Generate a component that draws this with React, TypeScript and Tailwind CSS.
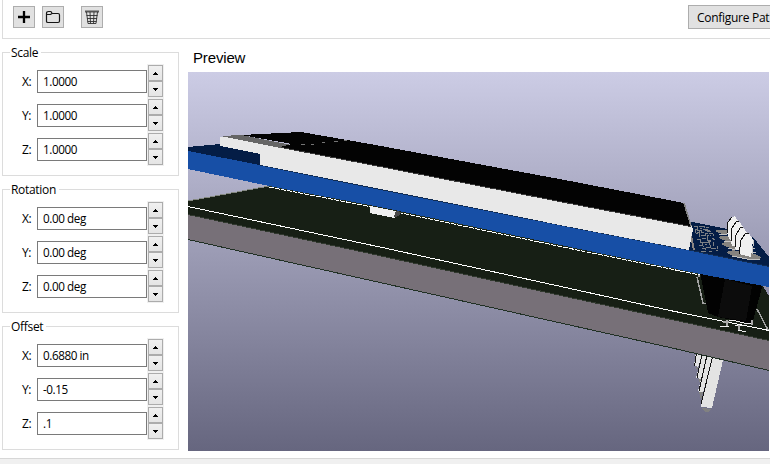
import React from "react";

const uiFont = "font-['Open_Sans','Noto_Sans',sans-serif]";

function ToolButton({ label, className = "", children }: { label: string; className?: string; children: React.ReactNode }) {
  return (
    <button aria-label={label} className={`flex h-[22px] w-[22px] shrink-0 items-center justify-center border border-[#adadad] bg-[#e1e1e1] ${className}`}>
      {children}
    </button>
  );
}

function Arrow({ down = false }: { down?: boolean }) {
  return (
    <svg width="5" height="3" viewBox="0 0 5 3" shapeRendering="crispEdges" className={down ? "rotate-180" : ""}>
      <path d="M2 0h1v1h1v1h1v1H0V2h1V1h1z" />
    </svg>
  );
}

function Spinner() {
  return (
    <div className="flex h-[34px] w-[17px] flex-col bg-[#f0f0f0] p-px">
      <button aria-label="Increase" className="flex h-4 items-center justify-center border border-[#acacac] bg-linear-to-b from-[#f0f0f0] to-[#e5e5e5]">
        <Arrow />
      </button>
      <button aria-label="Decrease" className="flex h-4 items-center justify-center border border-[#acacac] bg-linear-to-b from-[#f0f0f0] to-[#e5e5e5]">
        <Arrow down />
      </button>
    </div>
  );
}

function Group({ title, values }: { title: string; values: string[] }) {
  return (
    <fieldset className="h-[131px] w-[177px] min-w-0 border border-[#dcdcdc] pl-[9px]">
      <legend className="-ml-[2px] h-[15px] pr-[3px] pl-[1px] text-[12px] leading-[15px] tracking-[-0.3px]">{title}</legend>
      <div className="flex flex-col pt-1">
        {values.map((value, i) => (
          <div key={i} className="flex h-[34px] items-center">
            <span className="w-[25px] pt-[2px] pl-[10px] text-[12px] leading-4 tracking-[-0.4px]">{["X:", "Y:", "Z:"][i]}</span>
            <div className="flex h-[23px] w-[110px] items-center border border-[#7a7a7a] bg-white pb-px pl-[5px] text-[11.7px] leading-4 tracking-[-0.42px] whitespace-pre">
              {value}
            </div>
            <Spinner />
          </div>
        ))}
      </div>
    </fieldset>
  );
}

function BoardPreview() {
  return (
    <svg width="581" height="379" viewBox="188 72 581 379" shapeRendering="crispEdges" className="block">
      <defs>
        <linearGradient id="sky" x1="0" y1="0" x2="0" y2="1">
          <stop offset="0" stopColor="#cccce5" />
          <stop offset="1" stopColor="#66667f" />
        </linearGradient>
      </defs>
      <rect x="188" y="72" width="581" height="379" fill="url(#sky)" />

      {/* pins below the carrier board */}
      <g fill="#e3e3e3">
        <path d="M696 352H704L698 367L694 365Z" />
        <path d="M702 353H708L701 379L696 378Z" />
        <path d="M707 354H713L703 393L698 391Z" />
        <path d="M712 355H723V360L712 408L701 407V403Z" />
      </g>
      <path d="M699 392h4l-2 8zM702 408l9 1-3 3h-3zM696 367h2v2h-2zM698 379h3l-1 4z" fill="#818181" />
      <path d="M696.500 353L694.500 366M702 354L697 378M707 355L699 391M712.500 357L701 404" stroke="#141414" fill="none" />

      {/* carrier board */}
      <path d="M188 201L269 186L700 230L763 286L769 296V341L188 214Z" fill="#171f15" />
      <path d="M188 201L269 186" stroke="#858982" />
      <path d="M188 214L370 253L570 297L769 340V370L188 239Z" fill="#777078" />
      <path d="M188 214.500L370 253.500L570 297.500L769 340.500" stroke="#30382e" fill="none" />
      <path d="M188 239.500L670 347.500L769 370.500" stroke="#203024" fill="none" />
      <path d="M188 206.500L380 247L570 288.500L670 310.500L769 330.500" stroke="#fff" fill="none" />
      <path d="M269 187L380 208.500L570 248.500L700 275" stroke="#fff" strokeDasharray="5 1" fill="none" />
      <path d="M269 186L380 207.500L570 247.500L700 274" stroke="#22301f" strokeDasharray="3 2" fill="none" />
      <path d="M370 206L400 212L394 218L370 213Z" fill="#efefef" />
      <path d="M396 211l5 1-2 4-5 1z" fill="#484848" />

      {/* socket */}
      <path d="M697 277l6 26 4 1M698 276h2" stroke="#a2a2a2" strokeWidth="1.500" fill="none" />
      <path d="M700 272L708 313L718 317L752 324L763 284Z" fill="#020202" />
      <path d="M725 279L752 286L746 321L718 317Z" fill="#0c0c0c" />
      <path d="M757 309L768 330" stroke="#a2a2a2" strokeWidth="1.500" />
      <path d="M729 320l7 1 8 2 9 1M720 326l9 1M735 325h9M738 330l8 2" stroke="#eee" fill="none" />
      <path d="M727 320v6M739 325v5M752 320v5M723 322h6" stroke="#aaa" strokeWidth="2" fill="none" />

      {/* module board */}
      <path d="M188 147L220 144L260 153V166L188 151Z" fill="#041d46" />
      <path d="M688 222L693 222L727 229L753 237L769 257V268L685 250Z" fill="#041d46" />
      <path d="M188 151L260 165L370 187.500L570 227L689 250L769 266.500V287L700 274L570 247L380 207L269 186L188 169Z" fill="#174fa6" />
      <path d="M260 165L370 187.500L570 227L689 250L769 266.500" stroke="#102b51" fill="none" />

      {/* display */}
      <path d="M220 137L241 135L692 226L693 229L689 250L570 227L370 187L260 165V154L220 146Z" fill="#e8e8e8" />
      <path d="M220 136L241 135L292 145L281 148Z" fill="#656565" />
      <path d="M241 135L301 132L370 144L570 181L684 203L691 226L570 203L380 166L280 147L292 144Z" fill="#030303" />
      <path d="M281 147.500L380 166.500L570 203.500L691 226.500" stroke="#383838" fill="none" />
      <path d="M301 145l4-1M311 144h3M322 142h3M334 141h4M344 140h3" stroke="#747474" fill="none" />
      <path d="M684 203L691 226" stroke="#828282" strokeWidth="1.500" />
      <path d="M690 231L694 250" stroke="#8a8583" strokeWidth="2" />
      <path d="M689 228H693L689 250H687Z" fill="#e8e8e8" />

      {/* silkscreen around the header */}
      <g stroke="#7d8084" fill="none">
        <path d="M694 226h3v3h-2v4M699 226h5v2M706 227h3M697 230h4v2h3M704 229h3v2h4M696 234l3-2v5M701 235h4v-2h3M709 233l4 1v2M697 239h3v3h4M702 238l4 1M707 236v4h4M712 238l3 2M699 245h3v-2M704 242h5v3M708 241h3M713 242v4M702 248h3v2M706 247h4v-2M711 248h5M717 246v3M701 251h5M709 251h3M716 250h2" />
        <path d="M700 228l7 3M704 235l7 1M710 230l-3 2M707 244l-4 3" strokeDasharray="2 1" />
      </g>
      <g fill="#85837f">
        <ellipse cx="724" cy="232" rx="8" ry="2" transform="rotate(8 724 232)" />
        <ellipse cx="729" cy="239" rx="10" ry="2.500" transform="rotate(10 729 239)" />
        <ellipse cx="735" cy="246" rx="13" ry="3" transform="rotate(10 735 246)" />
        <ellipse cx="744" cy="255" rx="17" ry="3.500" transform="rotate(10 744 255)" />
      </g>
      <path d="M719 234l8 1M724 241l7 1M728 248l8 2M732 256l15 3 13 0M748 248l7 1M751 252l5 1" stroke="#c2c2c2" fill="none" />
      <g fill="#f0f0f0">
        <path d="M727 233L728 222L732 217L735 216L738 221L740 240H730Z" />
        <path d="M731 241L732 228L736 222L739 221L743 227L742 246H732Z" />
        <path d="M735 247L736 235L740 228L743 227L747 233V250H736Z" />
        <path d="M739 254L741 240L745 234L749 233L753 240L751 257Z" />
      </g>
      <path d="M727 233L728 222L732 217M731 241L732 228L736 222L739 221M735 247L736 235L740 228L743 227M739 254L741 240L745 234L749 233" stroke="#101010" fill="none" />
      <path d="M753 240v6l-1 8" stroke="#ccc" fill="none" />
    </svg>
  );
}

export default function App() {
  return (
    <main className={`flex h-[464px] w-[770px] flex-col overflow-hidden bg-white text-black ${uiFont}`}>
      <header className="ml-[2px] flex h-[39px] shrink-0 border-b border-l border-[#dcdcdc] pl-[10px]">
        <ToolButton label="Add model" className="mt-[6px]">
          <svg width="14" height="14" viewBox="0 0 14 14" className="shrink-0">
            <path d="M7 1v12M1 7h12" stroke="#000" strokeWidth="2.300" />
          </svg>
        </ToolButton>
        <ToolButton label="Open folder" className="mt-[6px] ml-[7px]">
          <svg width="16" height="14" viewBox="0 0 16 14" fill="none" stroke="#151515" strokeWidth="1.200" className="shrink-0">
            <path d="M1.500 11.500v-8q0-2 2-2h2q1 0 1.500 2h6q1.500 0 1.500 1.500v6q0 1.500-1.500 1.500h-10q-1.500 0-1.500-1zM1.500 4.500h4l1.500-1" />
          </svg>
        </ToolButton>
        <ToolButton label="Remove model" className="mt-[6px] ml-[17px]">
          <svg width="16" height="16" viewBox="0 0 16 16" fill="none" stroke="#303030" className="shrink-0">
            <path d="M1 2.500h14" strokeWidth="2" stroke="#555" />
            <path d="M2.500 3l1.500 11.500h8L13.500 3M6 3l.5 11.500M10 3l-.5 11.500M2.500 6.500h11M3 9.500h10M3.500 12.500h9" strokeWidth=".9" />
          </svg>
        </ToolButton>
        <button className="mt-[5px] ml-[585px] h-6 w-[82px] shrink-0 border-y border-l border-[#adadad] bg-[#e1e1e1] pl-2 text-left text-[12px] leading-[21px] tracking-[-0.28px] whitespace-nowrap">
          Configure Pat
        </button>
      </header>

      <div className="flex h-[419px] shrink-0 pl-[2px]">
        <aside className="flex w-[186px] flex-col gap-[6px] pt-[6px]">
          <Group title="Scale" values={["1.0000", "1.0000", "1.0000"]} />
          <Group title="Rotation" values={["0.00 deg", "0.00 deg", "0.00 deg"]} />
          <Group title="Offset" values={["0.6880 in", "-0.15", ".1"]} />
        </aside>
        <section className="flex flex-col">
          <h2 className="h-[33px] pt-[9px] pl-[5px] font-['Liberation_Sans',sans-serif] text-[15px] leading-5 tracking-[-0.15px]">Preview</h2>
          <BoardPreview />
        </section>
      </div>
      <footer className="h-[6px] shrink-0 border-t border-[#d7d7d7] bg-[#f0f0f0]" />
    </main>
  );
}
